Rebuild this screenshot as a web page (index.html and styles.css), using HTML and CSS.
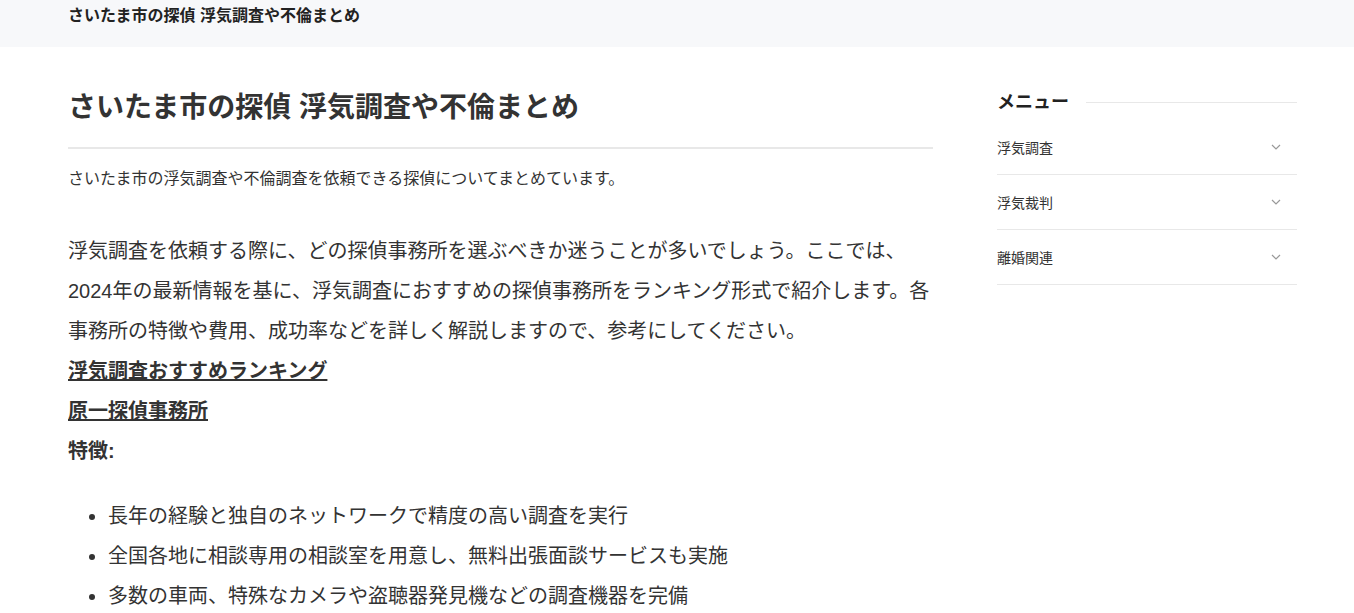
FILE: index.html
```html
<!DOCTYPE html>
<html lang="ja">
<head>
  <meta charset="UTF-8">
  <title>さいたま市の探偵 浮気調査や不倫まとめ</title>
  <link rel="stylesheet" href="styles.css">
</head>
<body>

  <header class="site-header">
    <div class="site-title">さいたま市の探偵 浮気調査や不倫まとめ</div>
  </header>

  <div class="wrap">
    <main class="content">
      <h1 class="page-title">さいたま市の探偵 浮気調査や不倫まとめ</h1>
      <p class="lead">さいたま市の浮気調査や不倫調査を依頼できる探偵についてまとめています。</p>

      <div class="article">
        <p>浮気調査を依頼する際に、どの探偵事務所を選ぶべきか迷うことが多いでしょう。ここでは、2024年の最新情報を基に、浮気調査におすすめの探偵事務所をランキング形式で紹介します。各事務所の特徴や費用、成功率などを詳しく解説しますので、参考にしてください。</p>
        <p><a href="#" class="strong-link">浮気調査おすすめランキング</a></p>
        <p><a href="#" class="strong-link">原一探偵事務所</a></p>
        <p><strong>特徴:</strong></p>
        <ul>
          <li>長年の経験と独自のネットワークで精度の高い調査を実行</li>
          <li>全国各地に相談専用の相談室を用意し、無料出張面談サービスも実施</li>
          <li>多数の車両、特殊なカメラや盗聴器発見機などの調査機器を完備</li>
        </ul>
      </div>
    </main>

    <aside class="sidebar">
      <div class="menu-title">メニュー</div>
      <ul class="menu">
        <li>浮気調査<span class="chev"><svg width="10" height="6" viewBox="0 0 10 6"><path d="M1 1l4 4 4-4" fill="none" stroke="#999" stroke-width="1.2"/></svg></span></li>
        <li>浮気裁判<span class="chev"><svg width="10" height="6" viewBox="0 0 10 6"><path d="M1 1l4 4 4-4" fill="none" stroke="#999" stroke-width="1.2"/></svg></span></li>
        <li>離婚関連<span class="chev"><svg width="10" height="6" viewBox="0 0 10 6"><path d="M1 1l4 4 4-4" fill="none" stroke="#999" stroke-width="1.2"/></svg></span></li>
      </ul>
    </aside>
  </div>

</body>
</html>
```

FILE: styles.css
```css
body {
  margin: 0;
  font-family: "Liberation Sans", "Noto Sans CJK JP", sans-serif;
  color: #333;
  background-color: #fff;
}

.site-header {
  height: 47px;
  background-color: #f7f8fa;
  padding: 0 68px;
  box-sizing: border-box;
}

.site-title {
  font-size: 16px;
  font-weight: bold;
  color: #222;
  line-height: 32px;
}

.wrap {
  display: flex;
  gap: 64px;
  padding: 0 57px 0 68px;
}

.content {
  flex: 0 0 865px;
}

.page-title {
  margin: 0;
  padding: 40px 0 18px;
  font-size: 28px;
  line-height: 1.5;
  color: #333;
  border-bottom: 2px solid #e8e8e8;
}

.lead {
  margin: 18px 0 0;
  font-size: 16px;
  line-height: 24px;
}

.article {
  margin-top: 40px;
  font-size: 20px;
  line-height: 40px;
}

.article p {
  margin: 0;
}

.strong-link {
  color: #333;
  font-weight: bold;
  text-decoration: underline;
}

.article ul {
  margin: 25px 0 0;
  padding-left: 40px;
}

.sidebar {
  flex: 0 0 300px;
  padding-top: 42px;
}

.menu-title {
  display: flex;
  align-items: center;
  gap: 17px;
  font-size: 18px;
  font-weight: bold;
  color: #222;
  line-height: 26px;
  margin-bottom: 5px;
}

.menu-title::after {
  content: "";
  flex: 1;
  border-top: 1px solid #e8e8e8;
}

.menu {
  list-style: none;
  margin: 0;
  padding: 0;
}

.menu li {
  display: flex;
  justify-content: space-between;
  align-items: center;
  font-size: 14px;
  height: 54px;
  border-bottom: 1px solid #e8e8e8;
}

.chev {
  display: flex;
  padding-right: 16px;
}
```
